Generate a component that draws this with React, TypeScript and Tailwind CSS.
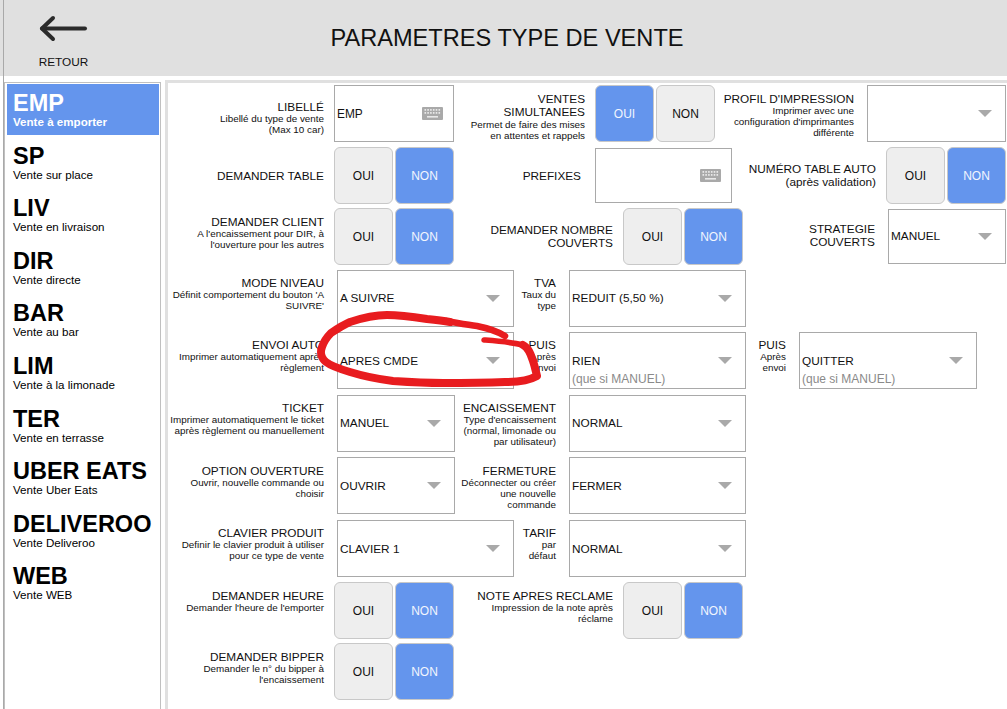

import React from "react";

const Blue = "bg-[#6495ed]";

function Label({
  w,
  title,
  sub,
  pr = "pr-[10px]",
  pt = "pt-[7px]",
  lead = "leading-[12px]",
  plain = "justify-center",
}: {
  w: string;
  title: React.ReactNode;
  sub?: React.ReactNode;
  pr?: string;
  pt?: string;
  lead?: string;
  plain?: string;
}) {
  return (
    <div className={`${w} ${pr} shrink-0 h-full flex flex-col text-right whitespace-nowrap ${sub ? pt : plain}`}>
      <div className={`text-[11.8px] ${sub ? lead : "leading-[13px]"} text-[#111]`}>{title}</div>
      {sub && <div className="text-[9.85px] leading-[11px] text-[#111]">{sub}</div>}
    </div>
  );
}

function Toggle({ on }: { on: "OUI" | "NON" }) {
  const btn = (t: string) => (
    <div
      className={`w-[59px] h-full rounded-[6px] border border-[#c8c8c8] flex items-center justify-center text-[12px] ${
        on === t ? `${Blue} text-[#f2f6fe] font-medium` : "bg-[#eeeeee] text-[#111]"
      }`}
    >
      {t}
    </div>
  );
  return (
    <div className="w-[120px] h-full shrink-0 flex justify-between">
      {btn("OUI")}
      {btn("NON")}
    </div>
  );
}

function KeyboardIcon() {
  return (
    <svg width="21" height="13" viewBox="0 0 21 13" className="shrink-0">
      <rect x="0" y="0" width="21" height="13" rx="1" fill="#a9a9a9" />
      {[0, 1].map((r) =>
        [0, 1, 2, 3, 4, 5].map((c) => (
          <rect key={`${r}${c}`} x={2.5 + c * 2.8} y={2 + r * 3} width="1.6" height="1.8" fill="#e8e8e8" />
        ))
      )}
      <rect x="5" y="9" width="11" height="1.6" fill="#e8e8e8" />
    </svg>
  );
}

function Input({ w, value, h = "h-full" }: { w: string; value?: string; h?: string }) {
  return (
    <div className={`${w} ${h} shrink-0 border border-[#a9a9a9] bg-white flex items-center pl-[2px] pr-[10px] text-[11.9px] text-[#111]`}>
      <span className="flex-1 pt-[2px]">{value}</span>
      <KeyboardIcon />
    </div>
  );
}

function Select({ w, value, note, h = "h-full", dy = "" }: { w: string; value?: string; note?: boolean; h?: string; dy?: string }) {
  return (
    <div className={`${w} ${h} shrink-0 relative border border-[#a9a9a9] bg-white flex items-center pl-[2px] pr-[13px] text-[11.8px] text-[#111]`}>
      <span className={`flex-1 whitespace-nowrap ${dy}`}>{value}</span>
      <svg width="14" height="7" viewBox="0 0 14 7" className="shrink-0">
        <path d="M0 0H14L7 7Z" fill="#a9a9a9" />
      </svg>
      {note && <span className="absolute left-[2px] bottom-[2px] text-[12px] leading-[14px] text-[#8a8a8a]">(que si MANUEL)</span>}
    </div>
  );
}

function Row({ children, mb = "mb-[5px]" }: { children: React.ReactNode; mb?: string }) {
  return <div className={`flex items-center h-[57px] shrink-0 ${mb}`}>{children}</div>;
}

const sideItems = [
  ["EMP", "Vente à emporter"],
  ["SP", "Vente sur place"],
  ["LIV", "Vente en livraison"],
  ["DIR", "Vente directe"],
  ["BAR", "Vente au bar"],
  ["LIM", "Vente à la limonade"],
  ["TER", "Vente en terrasse"],
  ["UBER EATS", "Vente Uber Eats"],
  ["DELIVEROO", "Vente Deliveroo"],
  ["WEB", "Vente WEB"],
];

export default function App() {
  return (
    <div className="relative w-[1007px] h-[709px] overflow-hidden bg-white font-['Liberation_Sans',Arial,sans-serif]">
      <div className="h-[76px] bg-[#e0e0e0] pl-[3px]">
        <div className="h-full border-l border-[#a9a9a9] flex">
          <div className="w-[119px] shrink-0 flex flex-col items-center pt-[14px]">
            <svg width="50" height="29" viewBox="0 0 50 29" fill="none" stroke="#2b2b2b" strokeWidth="4" strokeLinecap="round" strokeLinejoin="round">
              <path d="M3 14.5H46" />
              <path d="M14 4L3 14.5L14 25" />
            </svg>
            <div className="mt-[12px] text-[11.8px] leading-[14px] text-[#111]">RETOUR</div>
          </div>
          <div className="flex-1 text-center text-[23.6px] leading-[28px] pt-[24px] pr-[116px] text-[#111] whitespace-nowrap">PARAMETRES TYPE DE VENTE</div>
        </div>
      </div>
      <div className="flex h-[633px]">
        <div className="ml-[3px] w-[1px] bg-[#a9a9a9] shrink-0" />
        <div className="w-[157px] mt-[6px] border border-[#c0c0c0] border-b-0 shrink-0 pl-[2px] pr-[1px] pt-[1px]">
          {sideItems.map(([t, s], i) => (
            <div
              key={t}
              className={`h-[51px] mb-[1.6px] pl-[6px] pt-[7px] whitespace-nowrap ${i === 0 ? `${Blue} text-white` : "text-black"}`}
            >
              <div className="text-[23.5px] leading-[25px] font-bold">{t}</div>
              <div className={`text-[11.6px] leading-[12px] ${i === 0 ? "font-bold" : ""}`}>{s}</div>
            </div>
          ))}
        </div>
        <div className="ml-[4px] flex-1 mt-[4px] border-l-[3px] border-t-[3px] border-[#e0e0e0] flex flex-col pt-[2px]">
          <Row>
            <Label w="w-[166px]" pt="pt-[16px]" title="LIBELLÉ" sub={<>Libellé du type de vente<br />(Max 10 car)</>} />
            <Input w="w-[120px]" value="EMP" />
            <Label w="w-[141px]" pt="pt-[8px]" lead="leading-[13px]" title={<>VENTES<br />SIMULTANEES</>} sub={<>Permet de faire des mises<br />en attentes et rappels</>} />
            <Toggle on="OUI" />
            <Label w="w-[152px]" pr="pr-[13px]" pt="pt-[8px]" title="PROFIL D'IMPRESSION" sub={<>Imprimer avec une<br />configuration d'imprimantes<br />différente</>} />
            <Select w="w-[139px]" />
          </Row>
          <Row mb="mb-[4px]">
            <Label w="w-[166px]" plain="justify-center pt-[1px]" title="DEMANDER TABLE" />
            <Toggle on="NON" />
            <Label w="w-[141px]" pr="pr-[14px]" plain="justify-center pt-[1px]" title="PREFIXES" />
            <Input w="w-[137px]" h="h-[55px]" />
            <Label w="w-[154px]" title={<>NUMÉRO TABLE AUTO<br />(après validation)</>} />
            <Toggle on="NON" />
          </Row>
          <Row>
            <Label w="w-[166px]" pt="pt-[8px]" title="DEMANDER CLIENT" sub={<>A l'encaissement pour DIR, à<br />l'ouverture pour les autres</>} />
            <Toggle on="NON" />
            <Label w="w-[169px]" title={<>DEMANDER NOMBRE<br />COUVERTS</>} />
            <Toggle on="NON" />
            <Label w="w-[145px]" pr="pr-[13px]" plain="justify-center pb-[1px]" title={<>STRATEGIE<br />COUVERTS</>} />
            <Select w="w-[118px]" h="h-[55px]" value="MANUEL" />
          </Row>
          <Row>
            <Label w="w-[169px]" pr="pr-[13px]" title="MODE NIVEAU" sub={<>Définit comportement du bouton 'A<br />SUIVRE'</>} />
            <Select w="w-[177px]" value="A SUIVRE" />
            <Label w="w-[55px]" pr="pr-[13px]" title="TVA" sub={<>Taux du<br />type</>} />
            <Select w="w-[177px]" value="REDUIT (5,50 %)" />
          </Row>
          <Row mb="mb-[6px]">
            <Label w="w-[169px]" pr="pr-[13px]" title="ENVOI AUTO" sub={<>Imprimer automatiquement après<br />règlement</>} />
            <Select w="w-[177px]" value="APRES CMDE" dy="pt-[2px]" />
            <Label w="w-[55px]" pr="pr-[13px]" title="PUIS" sub={<>Après<br />envoi</>} />
            <Select w="w-[177px]" value="RIEN" note dy="pt-[2px]" />
            <Label w="w-[53px]" pr="pr-[13px]" title="PUIS" sub={<>Après<br />envoi</>} />
            <Select w="w-[178px]" value="QUITTER" note dy="pt-[2px]" />
          </Row>
          <Row>
            <Label w="w-[169px]" pr="pr-[13px]" title="TICKET" sub={<>Imprimer automatiquement le ticket<br />après règlement ou manuellement</>} />
            <Select w="w-[118px]" value="MANUEL" />
            <Label w="w-[114px]" pr="pr-[13px]" title="ENCAISSEMENT" sub={<>Type d'encaissement<br />(normal, limonade ou<br />par utilisateur)</>} />
            <Select w="w-[177px]" value="NORMAL" />
          </Row>
          <Row mb="mb-[6px]">
            <Label w="w-[169px]" pr="pr-[13px]" pt="pt-[8px]" title="OPTION OUVERTURE" sub={<>Ouvrir, nouvelle commande ou<br />choisir</>} />
            <Select w="w-[118px]" value="OUVRIR" dy="pt-[2px]" />
            <Label w="w-[114px]" pr="pr-[13px]" pt="pt-[8px]" title="FERMETURE" sub={<>Déconnecter ou créer<br />une nouvelle<br />commande</>} />
            <Select w="w-[177px]" value="FERMER" dy="pt-[2px]" />
          </Row>
          <Row>
            <Label w="w-[169px]" pr="pr-[13px]" title="CLAVIER PRODUIT" sub={<>Definir le clavier produit à utiliser<br />pour ce type de vente</>} />
            <Select w="w-[177px]" value="CLAVIER 1" dy="pt-[2px]" />
            <Label w="w-[55px]" pr="pr-[13px]" title="TARIF" sub={<>par<br />défaut</>} />
            <Select w="w-[177px]" value="NORMAL" dy="pt-[2px]" />
          </Row>
          <Row mb="mb-[4px]">
            <Label w="w-[166px]" pt="pt-[8px]" title="DEMANDER HEURE" sub="Demander l'heure de l'emporter" />
            <Toggle on="NON" />
            <Label w="w-[169px]" pt="pt-[8px]" title="NOTE APRES RECLAME" sub={<>Impression de la note après<br />réclame</>} />
            <Toggle on="NON" />
          </Row>
          <Row mb="mb-0">
            <Label w="w-[166px]" pt="pt-[8px]" title="DEMANDER BIPPER" sub={<>Demander le n° du bipper à<br />l'encaissement</>} />
            <Toggle on="NON" />
          </Row>
        </div>
      </div>
      <svg className="absolute left-0 top-0 pointer-events-none" width="1007" height="709" viewBox="0 0 1007 709" fill="none" stroke="#e81c1f" strokeLinecap="round" strokeLinejoin="round">
        <path d="M484 340C497 341 511 342 523 345" strokeWidth="5.5" />
        <path
          d="M523 345C529 348 531 355 533 361C535 367 536 372 537 376C530 380 520 382 505 382C480 383 460 383 443 383C425 383 408 382 393 381C377 379 363 376 350 372C340 369 331 366 326 362C321 358 320 352 322 347C324 341 327 337 331 333C337 329 343 325 350 322C362 318 375 315 387 315C400 315 414 317 427 319C436 320 444 321 450 322"
          strokeWidth="8"
        />
        <path d="M446 321C458 323 468 325 477 326C487 328 497 331 505 336" strokeWidth="6.5" />
      </svg>
    </div>
  );
}
